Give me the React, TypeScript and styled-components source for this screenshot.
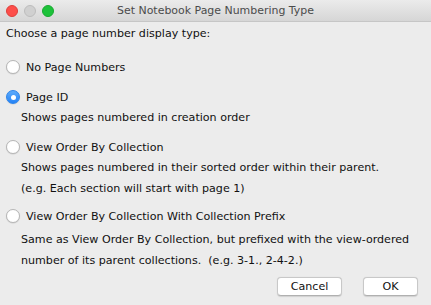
import React, { useState } from "react";
import styled, { createGlobalStyle } from "styled-components";

const Global = createGlobalStyle`
  html, body { margin: 0; padding: 0; background: #ececec; }
  * { box-sizing: border-box; }
`;

const Window = styled.div`
  width: 431px;
  height: 305px;
  background: #ececec;
  display: flex;
  flex-direction: column;
  font-family: "DejaVu Sans", "Liberation Sans", sans-serif;
  font-size: 11.1px;
  color: #111111;
  overflow: hidden;
`;

const TitleBar = styled.div`
  height: 22px;
  flex: none;
  display: flex;
  align-items: center;
  position: relative;
  background: linear-gradient(#ebebeb, #d6d6d6);
  border-bottom: 1px solid #c6c6c6;
  padding-left: 6px;
`;

const Lights = styled.div`
  display: flex;
  gap: 6px;
`;

const Light = styled.span<{ $c: string; $b: string }>`
  width: 12px;
  height: 12px;
  border-radius: 50%;
  background: ${(p) => p.$c};
  border: 0.5px solid ${(p) => p.$b};
`;

const Title = styled.div`
  position: absolute;
  left: 0;
  right: 0;
  text-align: center;
  font-size: 10.95px;
  color: #4b4b4b;
  pointer-events: none;
`;

const Content = styled.div`
  flex: 1;
  display: flex;
  flex-direction: column;
  padding: 2px 13px 0 6px;
`;

const Prompt = styled.div`
  line-height: 20px;
  margin-bottom: 13px;
  white-space: nowrap;
`;

const Option = styled.div<{ $gap: number }>`
  display: flex;
  flex-direction: column;
  margin-bottom: ${(p) => p.$gap}px;
`;

const RadioRow = styled.label`
  display: flex;
  align-items: center;
  gap: 6px;
  height: 20px;
  white-space: nowrap;
  cursor: default;
`;

const Radio = styled.span<{ $on: boolean }>`
  width: 14px;
  height: 14px;
  border-radius: 50%;
  flex: none;
  display: flex;
  align-items: center;
  justify-content: center;
  background: ${(p) => (p.$on ? "linear-gradient(#5eabfb, #2583f6)" : "#ffffff")};
  border: 1px solid ${(p) => (p.$on ? "#2c84ea" : "#b6b6b6")};
  box-shadow: 0 0.5px 1px rgba(0, 0, 0, 0.14);
  &::after {
    content: "";
    width: 5px;
    height: 5px;
    border-radius: 50%;
    background: #fff;
    display: ${(p) => (p.$on ? "block" : "none")};
  }
`;

const DescBlock = styled.div<{ $offset: number }>`
  padding-left: 15px;
  padding-top: ${(p) => p.$offset}px;
`;

const Desc = styled.div`
  line-height: 21px;
  white-space: pre;
`;

const Footer = styled.div`
  display: flex;
  justify-content: flex-end;
  gap: 21px;
  margin-top: auto;
  margin-bottom: 9px;
`;

const Button = styled.button<{ $w: number }>`
  width: ${(p) => p.$w}px;
  height: 19px;
  background: #ffffff;
  border: 1px solid #c8c8c8;
  border-bottom-color: #b0b0b0;
  border-radius: 4px;
  font-family: inherit;
  font-size: 11.1px;
  color: #111111;
  padding: 0;
  box-shadow: 0 0.5px 1px rgba(0, 0, 0, 0.12);
`;

const options = [
  { id: "none", label: "No Page Numbers", desc: [] as string[], offset: 0, gap: 10 },
  { id: "pageid", label: "Page ID", desc: ["Shows pages numbered in creation order"], offset: 0, gap: 9 },
  {
    id: "view",
    label: "View Order By Collection",
    desc: [
      "Shows pages numbered in their sorted order within their parent.",
      "(e.g. Each section will start with page 1)",
    ],
    offset: 0,
    gap: 7,
  },
  {
    id: "prefix",
    label: "View Order By Collection With Collection Prefix",
    desc: [
      "Same as View Order By Collection, but prefixed with the view-ordered",
      "number of its parent collections.  (e.g. 3-1., 2-4-2.)",
    ],
    offset: 3,
    gap: 0,
  },
];

export default function App() {
  const [sel, setSel] = useState("pageid");
  return (
    <>
      <Global />
      <Window>
        <TitleBar>
          <Lights>
            <Light $c="#fd4e4a" $b="#de3f3b" />
            <Light $c="#d0d0d0" $b="#bdbdbd" />
            <Light $c="#1dc23a" $b="#19a931" />
          </Lights>
          <Title>Set Notebook Page Numbering Type</Title>
        </TitleBar>
        <Content>
          <Prompt>Choose a page number display type:</Prompt>
          {options.map((o) => (
            <Option key={o.id} $gap={o.gap}>
              <RadioRow onClick={() => setSel(o.id)}>
                <Radio $on={sel === o.id} />
                {o.label}
              </RadioRow>
              {o.desc.length > 0 && (
                <DescBlock $offset={o.offset}>
                  {o.desc.map((d) => (
                    <Desc key={d}>{d}</Desc>
                  ))}
                </DescBlock>
              )}
            </Option>
          ))}
          <Footer>
            <Button $w={65}>Cancel</Button>
            <Button $w={55}>OK</Button>
          </Footer>
        </Content>
      </Window>
    </>
  );
}
